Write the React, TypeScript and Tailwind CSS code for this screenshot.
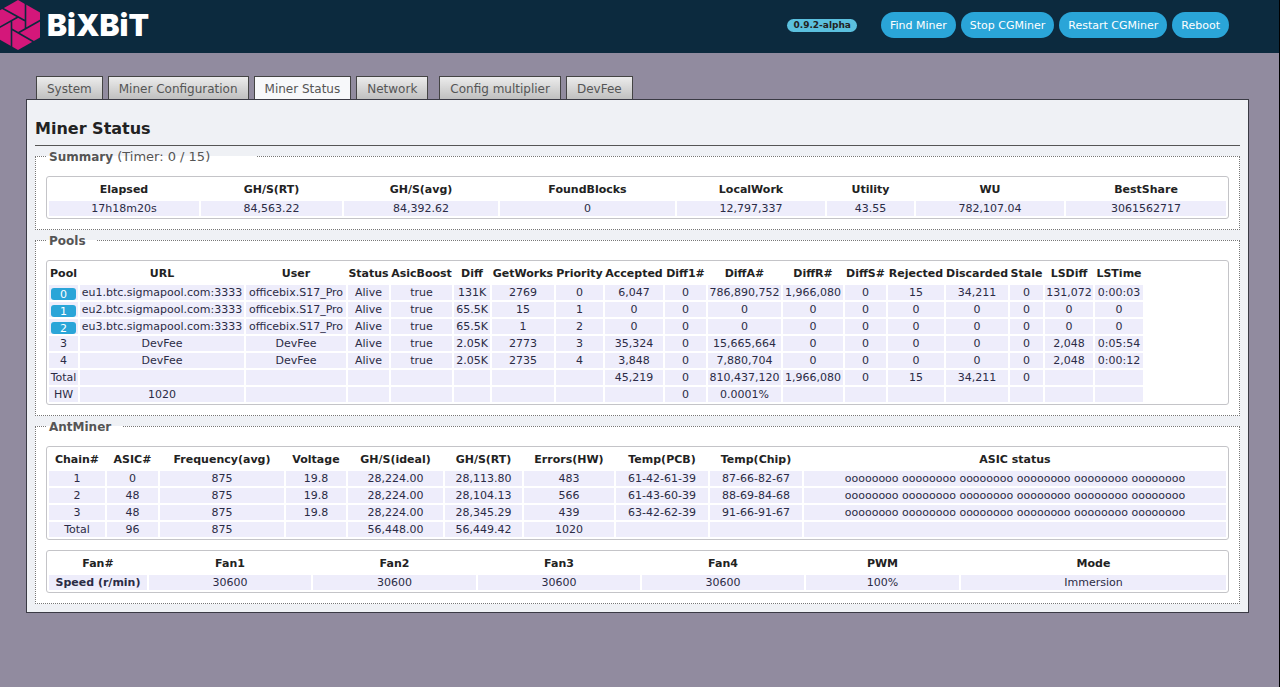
import React from 'react';
import { clsx } from 'clsx';

type Cell = React.ReactNode;

const summaryCols = [
  { label: 'Elapsed', width: 'w-[150px]' },
  { label: 'GH/S(RT)', width: 'w-[141px]' },
  { label: 'GH/S(avg)', width: 'w-[154px]' },
  { label: 'FoundBlocks', width: 'w-[175px]' },
  { label: 'LocalWork', width: 'w-[148px]' },
  { label: 'Utility', width: 'w-[87px]' },
  { label: 'WU', width: 'w-[148px]' },
  { label: 'BestShare', width: 'w-[160px]' },
];

const summaryRows: Cell[][] = [
  ['17h18m20s', '84,563.22', '84,392.62', '0', '12,797,337', '43.55', '782,107.04', '3061562717'],
];

const poolCols = [
  { label: 'Pool', width: 'w-[29px]' },
  { label: 'URL', width: 'w-[164px]' },
  { label: 'User', width: 'w-[100px]' },
  { label: 'Status', width: 'w-[41px]' },
  { label: 'AsicBoost', width: 'w-[61px]' },
  { label: 'Diff', width: 'w-[36px]' },
  { label: 'GetWorks', width: 'w-[62px]' },
  { label: 'Priority', width: 'w-[47px]' },
  { label: 'Accepted', width: 'w-[58px]' },
  { label: 'Diff1#', width: 'w-[41px]' },
  { label: 'DiffA#', width: 'w-[73px]' },
  { label: 'DiffR#', width: 'w-[60px]' },
  { label: 'DiffS#', width: 'w-[41px]' },
  { label: 'Rejected', width: 'w-[56px]' },
  { label: 'Discarded', width: 'w-[62px]' },
  { label: 'Stale', width: 'w-[33px]' },
  { label: 'LSDiff', width: 'w-[48px]' },
  { label: 'LSTime', width: 'w-[48px]' },
];

const poolRows: Cell[][] = [
  [<PoolButton id={0} />, 'eu1.btc.sigmapool.com:3333', 'officebix.S17_Pro', 'Alive', 'true', '131K', '2769', '0', '6,047', '0', '786,890,752', '1,966,080', '0', '15', '34,211', '0', '131,072', '0:00:03'],
  [<PoolButton id={1} />, 'eu2.btc.sigmapool.com:3333', 'officebix.S17_Pro', 'Alive', 'true', '65.5K', '15', '1', '0', '0', '0', '0', '0', '0', '0', '0', '0', '0'],
  [<PoolButton id={2} />, 'eu3.btc.sigmapool.com:3333', 'officebix.S17_Pro', 'Alive', 'true', '65.5K', '1', '2', '0', '0', '0', '0', '0', '0', '0', '0', '0', '0'],
  ['3', 'DevFee', 'DevFee', 'Alive', 'true', '2.05K', '2773', '3', '35,324', '0', '15,665,664', '0', '0', '0', '0', '0', '2,048', '0:05:54'],
  ['4', 'DevFee', 'DevFee', 'Alive', 'true', '2.05K', '2735', '4', '3,848', '0', '7,880,704', '0', '0', '0', '0', '0', '2,048', '0:00:12'],
  ['Total', '', '', '', '', '', '', '', '45,219', '0', '810,437,120', '1,966,080', '0', '15', '34,211', '0', '', ''],
  ['HW', '1020', '', '', '', '', '', '', '', '0', '0.0001%', '', '', '', '', '', '', ''],
];

const chainCols = [
  { label: 'Chain#', width: 'w-[56px]' },
  { label: 'ASIC#', width: 'w-[51px]' },
  { label: 'Frequency(avg)', width: 'w-[124px]' },
  { label: 'Voltage', width: 'w-[60px]' },
  { label: 'GH/S(ideal)', width: 'w-[95px]' },
  { label: 'GH/S(RT)', width: 'w-[77px]' },
  { label: 'Errors(HW)', width: 'w-[90px]' },
  { label: 'Temp(PCB)', width: 'w-[92px]' },
  { label: 'Temp(Chip)', width: 'w-[92px]' },
  { label: 'ASIC status', width: 'w-[422px]' },
];

const asicStatus = 'oooooooo oooooooo oooooooo oooooooo oooooooo oooooooo';

const chainRows: Cell[][] = [
  ['1', '0', '875', '19.8', '28,224.00', '28,113.80', '483', '61-42-61-39', '87-66-82-67', asicStatus],
  ['2', '48', '875', '19.8', '28,224.00', '28,104.13', '566', '61-43-60-39', '88-69-84-68', asicStatus],
  ['3', '48', '875', '19.8', '28,224.00', '28,345.29', '439', '63-42-62-39', '91-66-91-67', asicStatus],
  ['Total', '96', '875', '', '56,448.00', '56,449.42', '1020', '', '', ''],
];

const fanCols = [
  { label: 'Fan#', width: 'w-[98px]' },
  { label: 'Fan1', width: 'w-[162px]' },
  { label: 'Fan2', width: 'w-[163px]' },
  { label: 'Fan3', width: 'w-[162px]' },
  { label: 'Fan4', width: 'w-[162px]' },
  { label: 'PWM', width: 'w-[153px]' },
  { label: 'Mode', width: 'w-[265px]' },
];

const fanRows: Cell[][] = [
  [<b>Speed (r/min)</b>, '30600', '30600', '30600', '30600', '100%', 'Immersion'],
];

const tabGroups = [
  ['System', 'Miner Configuration', 'Miner Status', 'Network'],
  ['Config multiplier', 'DevFee'],
];

const actions = ['Find Miner', 'Stop CGMiner', 'Restart CGMiner', 'Reboot'];

function PoolButton({ id }: { id: number }) {
  return (
    <button type="button" className="mx-auto mt-[3px] block h-[12px] w-[25px] rounded-[3px] bg-[#2aa5d8] leading-[13px] text-white">
      {id}
    </button>
  );
}

function Logo() {
  return (
    <a href="#" className="flex h-[53px] items-start text-white">
      <svg viewBox="0 0 41 51" className="h-[51px] w-[41px]" aria-hidden="true">
        <path d="M18 0 40 12.500V37.500L18 50-4 37.500V12.500Z" fill="#d4177a" />
        {/* aperture blades: each side of the inner hexagon runs on to the rim */}
        <path
          d="M11.500 21V47M11.500 29 34 42M18 33 41 20M25.500 29V3M25.500 21 2 8M18 17-5 30"
          stroke="#0c2a3e"
          strokeWidth="1.600"
          fill="none"
        />
      </svg>
      <span className="ml-[6px] mt-[5px] font-['Inter',sans-serif] text-[30px] leading-[40px] font-black">BiXBiT</span>
    </a>
  );
}

function DataTable({ cols, rows, className }: { cols: { label: string; width: string }[]; rows: Cell[][]; className?: string }) {
  return (
    <div className="overflow-x-auto rounded-[3px] border border-[#c4c4c8] bg-white">
      <table className={clsx('table-fixed border-separate border-spacing-[2px] text-center text-[11px] leading-[15px] whitespace-nowrap', className ?? 'w-full')}>
        <colgroup>
          {cols.map((col) => (
            <col key={col.label} className={col.width} />
          ))}
        </colgroup>
        <thead>
          <tr className="h-[20px] text-[#222]">
            {cols.map((col) => (
              <th key={col.label} scope="col" className="p-0 font-bold">{col.label}</th>
            ))}
          </tr>
        </thead>
        <tbody className="text-[#2b2b45]">
          {rows.map((row, r) => (
            <tr key={r} className="h-[15px]">
              {row.map((cell, c) => (
                <td key={c} className="bg-[#eeedfb] p-0">{cell}</td>
              ))}
            </tr>
          ))}
        </tbody>
      </table>
    </div>
  );
}

function Section({ title, note, children }: { title: string; note?: string; children: React.ReactNode }) {
  return (
    <fieldset className="min-w-0 border border-dotted border-[#777] bg-white px-[10px] pt-[11px] pb-[10px]">
      <legend className={clsx('h-[17px] px-[3px] text-[12px] leading-[18px] text-[#555]', note ? 'pr-[46px]' : 'pr-[11px]')}>
        <b>{title}</b>
        {note && <span className="text-[13px]"> {note}</span>}
      </legend>
      {children}
    </fieldset>
  );
}

export default function App() {
  return (
    <div className="min-h-screen border-r border-black bg-[#918b9f] font-['DejaVu_Sans',sans-serif] text-[#222]">
      <header className="flex h-[53px] items-start justify-between bg-[#0c2a3e] pr-[50px]">
        <Logo />
        <div className="flex items-center gap-[24px] pt-[12px]">
          <span className="rounded-full bg-[#5bc0de] px-[6px] text-[9px] leading-[13px] font-bold">0.9.2-alpha</span>
          <div className="flex gap-[5px]">
            {actions.map((action) => (
              <button key={action} type="button" className="h-[26px] rounded-full bg-[#2aa5d8] px-[9px] pt-[2px] text-[11px] text-white">
                {action}
              </button>
            ))}
          </div>
        </div>
      </header>

      <div className="pt-[23px] pr-[30px] pl-[26px]">
        <nav className="flex gap-[11px] pl-[10px]">
          {tabGroups.map((group, i) => (
            <div key={i} className="flex gap-[5px]">
              {group.map((tab) => (
                <a
                  key={tab}
                  href="#"
                  className={clsx(
                    'h-[23px] border border-b-0 border-[#444] px-[10px] text-[12px] leading-[24px] text-[#555]',
                    tab === 'Miner Status' ? 'bg-[#f7f8fa]' : 'bg-linear-to-b from-[#ececec] to-[#c0c0c0]'
                  )}
                >
                  {tab}
                </a>
              ))}
            </div>
          ))}
        </nav>

        <main className="border border-[#3a3a44] bg-[#eff1f5] px-[8px] pb-[8px]">
          <h1 className="border-b border-[#555] pt-[18px] pb-[6px] text-[16px] leading-[21px] font-bold">Miner Status</h1>
          <div className="mt-[2px] flex flex-col gap-[2px]">
            <Section title="Summary" note="(Timer: 0 / 15)">
              <DataTable cols={summaryCols} rows={summaryRows} />
            </Section>
            <Section title="Pools">
              <DataTable cols={poolCols} rows={poolRows} className="w-[1098px]" />
            </Section>
            <Section title="AntMiner">
              <div className="flex flex-col gap-[10px]">
                <DataTable cols={chainCols} rows={chainRows} />
                <DataTable cols={fanCols} rows={fanRows} />
              </div>
            </Section>
          </div>
        </main>
      </div>
    </div>
  );
}
